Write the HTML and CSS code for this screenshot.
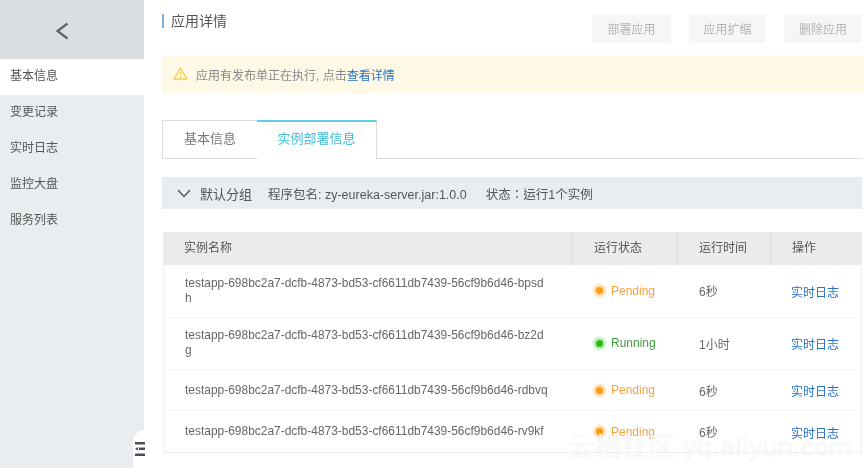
FILE: index.html
```html
<!DOCTYPE html>
<html lang="zh-CN">
<head>
<meta charset="utf-8">
<title>应用详情</title>
<link rel="stylesheet" href="styles.css">
</head>
<body>
<div class="page">
  <aside class="sidebar">
    <div class="back">
      <svg width="14" height="20" viewBox="0 0 14 20"><path d="M12.500 2.500 L2.500 10 L12.500 17.500" fill="none" stroke="#5c6670" stroke-width="2.200"/></svg>
    </div>
    <nav class="nav">
      <a class="nav-item active">基本信息</a>
      <a class="nav-item">变更记录</a>
      <a class="nav-item">实时日志</a>
      <a class="nav-item">监控大盘</a>
      <a class="nav-item">服务列表</a>
    </nav>
    <div class="handle">
      <svg width="10" height="14" viewBox="0 0 10 14"><path d="M0 0h10v2.500H0zM0 11.500h10v2.500H0zM4 5.500h6v2.500H4z" fill="#47505a"/><path d="M0 6.700 L3 4.900 V8.500z" fill="#47505a"/></svg>
    </div>
  </aside>
  <main class="main">
    <header class="head">
      <h1 class="title">应用详情</h1>
      <div class="actions">
        <button class="btn b1">部署应用</button>
        <button class="btn b2">应用扩缩</button>
        <button class="btn b3">删除应用</button>
      </div>
    </header>
    <div class="alert">
      <svg class="warn" width="15" height="13" viewBox="0 0 15 13"><path d="M7.500 1 L14 12 H1z" fill="none" stroke="#f6ca55" stroke-width="1.400" stroke-linejoin="round"/><path d="M7.500 4.500V8.500M7.500 9.500V11" stroke="#f6ca55" stroke-width="1.300"/></svg>
      <span>应用有发布单正在执行, 点击<a class="link">查看详情</a></span>
    </div>
    <div class="tabs">
      <div class="tab">基本信息</div>
      <div class="tab current">实例部署信息</div>
    </div>
    <div class="group">
      <svg class="chev" width="14" height="9" viewBox="0 0 14 9"><path d="M1 1 L7 7.500 L13 1" fill="none" stroke="#4d5660" stroke-width="1.400"/></svg>
      <span class="group-name">默认分组</span>
      <span class="group-pkg">程序包名: zy-eureka-server.jar:1.0.0</span>
      <span class="group-state" lang="zh-Hant">状态：运行1个实例</span>
    </div>
    <div class="table">
      <div class="row header">
        <div class="cell name">实例名称</div>
        <div class="cell status">运行状态</div>
        <div class="cell time">运行时间</div>
        <div class="cell ops">操作</div>
      </div>
      <div class="row tall">
        <div class="cell name">testapp-698bc2a7-dcfb-4873-bd53-cf6611db7439-56cf9b6d46-bpsdh</div>
        <div class="cell status"><i class="dot pending"></i><span class="pend">Pending</span></div>
        <div class="cell time">6秒</div>
        <div class="cell ops"><a class="link">实时日志</a></div>
      </div>
      <div class="row tall">
        <div class="cell name">testapp-698bc2a7-dcfb-4873-bd53-cf6611db7439-56cf9b6d46-bz2dg</div>
        <div class="cell status"><i class="dot running"></i><span class="run">Running</span></div>
        <div class="cell time">1小时</div>
        <div class="cell ops"><a class="link">实时日志</a></div>
      </div>
      <div class="row">
        <div class="cell name">testapp-698bc2a7-dcfb-4873-bd53-cf6611db7439-56cf9b6d46-rdbvq</div>
        <div class="cell status"><i class="dot pending"></i><span class="pend">Pending</span></div>
        <div class="cell time">6秒</div>
        <div class="cell ops"><a class="link">实时日志</a></div>
      </div>
      <div class="row">
        <div class="cell name">testapp-698bc2a7-dcfb-4873-bd53-cf6611db7439-56cf9b6d46-rv9kf</div>
        <div class="cell status"><i class="dot pending"></i><span class="pend">Pending</span></div>
        <div class="cell time">6秒</div>
        <div class="cell ops"><a class="link">实时日志</a></div>
      </div>
    </div>
  </main>
  <div class="watermark">云栖社区 yq.aliyun.com</div>
</div>
</body>
</html>
```
FILE: styles.css
```css
* { box-sizing: border-box; }
html, body { margin: 0; padding: 0; height: 100%; overflow: hidden; background: #fff; }
body { font-family: "Liberation Sans", "Noto Sans CJK SC", sans-serif; font-size: 12px; color: #666; }
.page { display: flex; width: 864px; height: 468px; position: relative; overflow: hidden; filter: blur(0.3px); }
.sidebar { width: 144px; flex: none; background: #e9edf0; position: relative; }
.back { height: 59px; background: #d9dee2; display: flex; align-items: center; justify-content: center; padding-right: 20px; padding-top: 2px; }
.nav { display: flex; flex-direction: column; }
.nav-item { height: 36px; line-height: 35px; padding-left: 10px; color: #555; }
.nav-item.active { background: #fff; }
.handle { position: absolute; right: -1px; bottom: 0; width: 12px; height: 38px; background: #fff; border-radius: 12px 0 0 0; display: flex; align-items: center; justify-content: flex-end; }
.main { flex: 1; min-width: 0; padding: 14px 2px 0 18px; }
.head { display: flex; justify-content: space-between; height: 42px; }
.title { margin: 0; height: 14px; font-size: 14px; line-height: 14px; font-weight: 400; color: #555; border-left: 2px solid #86b0dc; padding-left: 7px; }
.actions { display: flex; gap: 18px; }
.btn { height: 29px; border: 0; background: #f6f6f6; color: #b4b4b4; font: inherit; padding: 0; }
.b1 { width: 79px; }
.b2 { width: 77px; }
.b3 { width: 78px; }
.alert { height: 37px; margin-right: -2px; background: #fef9e6; border-radius: 2px 0 0 2px; display: flex; align-items: center; padding-left: 11px; gap: 8px; color: #888; }
.warn { flex: none; margin-top: -2px; }
.link { color: #2a73c4; }
.tabs { display: flex; margin-top: 27px; height: 39px; border-bottom: 1px solid #dcdcdc; }
.tab { width: 96px; height: 39px; border: 1px solid #dcdcdc; font-size: 13px; line-height: 36px; text-align: center; color: #777; background: #fff; }
.tab.current { width: 120px; margin-left: -1px; border-top: 2px solid #5cd0e2; border-left: 0; border-bottom: 0; color: #45bdd8; height: 39px; line-height: 34px; }
.group { margin-top: 18px; height: 32px; background: #e9edf0; display: flex; align-items: center; padding-left: 15px; font-size: 13px; color: #555; }
.chev { flex: none; margin-right: 9px; }
.group-name { margin-right: 16px; }
.group-pkg { margin-right: 19px; font-size: 12.500px; }
.group-state { font-size: 12.500px; font-family: "Liberation Sans", "Noto Sans CJK TC", sans-serif; }
.table { margin-top: 23px; margin-left: 1px; border: 1px solid #eee; border-top: 0; border-left-color: #f0f0f0; }
.row { display: grid; grid-template-columns: 407px 106px 93px 1fr; height: 41px; align-items: center; border-bottom: 1px solid #f3f3f3; }
.row:last-child { border-bottom: 0; }
.row.tall { height: 52.500px; }
.row.header { height: 33px; background: #ebebeb; border-bottom: 0; align-items: stretch; }
.cell { padding-left: 22px; }
.cell.name { padding: 0 22px 0 21px; font-size: 11.900px; letter-spacing: 0.030px; word-break: break-all; line-height: 15px; color: #666; }
.cell.status { display: flex; align-items: center; padding-left: 25px; gap: 8px; }
.cell.ops { padding-left: 21px; padding-top: 1px; }
.header .cell { line-height: 33px; color: #555; padding-top: 0; }
.header .cell.name { padding-left: 20px; font-size: 12px; letter-spacing: 0; line-height: 33px; }
.header .cell.status { padding-left: 22px; }
.header .cell.time { padding-left: 21px; }
.header .cell + .cell { border-left: 1px solid #dcdcdc; }
.dot { width: 7px; height: 7px; border-radius: 50%; flex: none; }
.dot.pending { background: #fb9b12; box-shadow: 0 0 2px 3px #fcdcae; }
.dot.running { background: #2fba14; box-shadow: 0 0 2px 3px #bcecb4; }
.pend { color: #f8a23c; }
.run { color: #3f9e3f; }
.watermark { position: absolute; left: 568px; top: 426px; font-size: 26px; color: rgba(255,255,255,0.85); letter-spacing: 0.8px; text-shadow: 0 0 1px rgba(190,190,190,0.55); white-space: nowrap; pointer-events: none; }
```
